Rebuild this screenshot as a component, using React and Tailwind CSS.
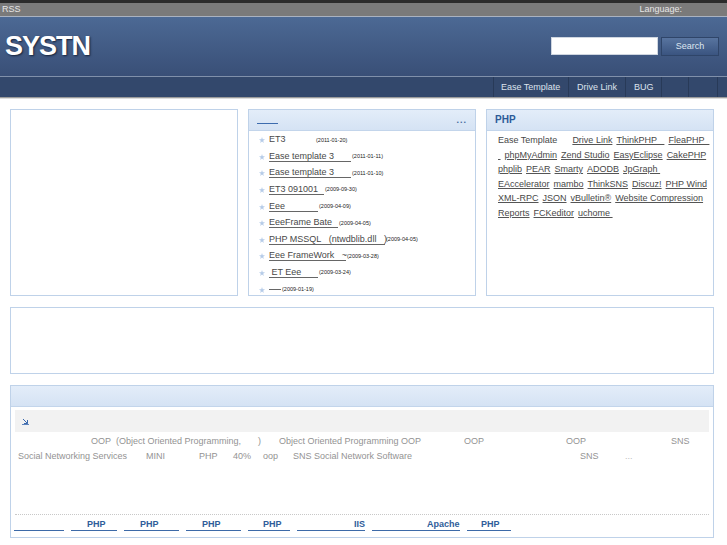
import React from "react";

const Star = () => (
  <svg width="6" height="6" viewBox="0 0 10 10" className="shrink-0">
    <polygon points="5,0 6.2,3.6 10,3.8 7,6.1 8.1,10 5,7.7 1.9,10 3,6.1 0,3.8 3.8,3.6" fill="#b5cbe8" />
  </svg>
);

const items = [
  { t: "ET3", w: "w-[46px]", u: false, d: "(2011-01-20)" },
  { t: "Ease template 3", w: "w-[82px]", u: true, d: "(2011-01-11)" },
  { t: "Ease template 3", w: "w-[82px]", u: true, d: "(2011-01-10)" },
  { t: "ET3 091001", w: "w-[55px]", u: true, d: "(2009-09-30)" },
  { t: "Eee", w: "w-[49px]", u: true, d: "(2009-04-09)" },
  { t: "EeeFrame Bate", w: "w-[69px]", u: true, d: "(2009-04-05)" },
  { t: "PHP MSSQL\u00a0\u00a0\u00a0(ntwdblib.dll\u00a0\u00a0\u00a0)", w: "w-[116px]", u: true, d: "(2009-04-05)" },
  { t: "Eee FrameWork\u00a0\u00a0\u00a0~", w: "w-[77px]", u: true, d: "(2009-03-28)" },
  { t: "\u00a0ET Eee", w: "w-[49px]", u: true, d: "(2009-03-24)" },
  { t: "", w: "w-[12px]", u: true, d: "(2009-01-19)" },
];

const L = ({ children, className = "" }) => (
  <span className={"underline underline-offset-[1px] decoration-[#555] whitespace-pre " + className}>{children}</span>
);

const line1 = [
  { t: "", w: "w-[73px]" },
  { t: "OOP", w: "w-[25px]" },
  { t: "(Object Oriented Programming,", w: "w-[142px]" },
  { t: ")", w: "w-[21px]" },
  { t: "Object Oriented Programming OOP", w: "w-[185px]" },
  { t: "OOP", w: "w-[102px]" },
  { t: "OOP", w: "w-[105px]" },
  { t: "SNS", w: "w-[30px]" },
];

const line2 = [
  { t: "Social Networking Services", w: "w-[128px]" },
  { t: "MINI", w: "w-[53px]" },
  { t: "PHP", w: "w-[34px]" },
  { t: "40%", w: "w-[30px]" },
  { t: "oop", w: "w-[30px]" },
  { t: "SNS Social Network Software", w: "w-[287px]" },
  { t: "SNS", w: "w-[45px]" },
];

const bottomLinks = [
  { t: "", c: "w-[50px] pl-[0px]" },
  { t: "PHP", c: "w-[46px] pl-[16px]" },
  { t: "PHP", c: "w-[55px] pl-[16px]" },
  { t: "PHP", c: "w-[55px] pl-[16px]" },
  { t: "PHP", c: "w-[42px] pl-[15px]" },
  { t: "IIS", c: "w-[68px] pl-[57px]" },
  { t: "Apache", c: "w-[88px] pl-[55px]" },
  { t: "PHP", c: "w-[44px] pl-[14px]" },
];

export default function App() {
  return (
    <div className="w-[727px] h-[545px] overflow-hidden bg-white text-[9px] leading-none font-['Liberation_Sans',Arial,sans-serif]">
      {/* top strip */}
      <div className="h-[3px] bg-[#2b2b2b]" />
      <div className="h-[13px] bg-[#7a7a7a] flex items-center justify-between pl-[2px] pr-[45px] text-[#e6e6e6]">
        <span>RSS</span>
        <span>Language:</span>
      </div>
      <div className="h-[1px] bg-[#a9b2c0]" />
      {/* header */}
      <div className="h-[59px] bg-linear-to-b from-[#4c6994] to-[#394f77] flex items-center justify-between pl-[5px] pr-[8px]">
        <div className="text-[27px] font-bold tracking-[-1px] text-white leading-none [text-shadow:1px_1px_2px_#15223a]">
          SYSTN
        </div>
        <div className="flex items-center gap-[3px] mt-[-1px]">
          <div className="w-[107px] h-[18px] bg-white border border-[#cfd6e0]" />
          <div className="w-[58px] h-[19px] flex items-center justify-center bg-linear-to-b from-[#58749f] to-[#3a5480] border border-[#2f4569] text-[#dfe6f0]">
            Search
          </div>
        </div>
      </div>
      <div className="h-[1px] bg-[#8090aa]" />
      {/* nav */}
      <div className="h-[20px] bg-[#33486c] flex justify-end pr-[9px] text-[#dde3ec]">
        <div className="w-[75px] border-l border-[#283a58] flex items-center pl-[7px]">Ease Template</div>
        <div className="w-[57px] border-l border-[#283a58] flex items-center pl-[8px]">Drive Link</div>
        <div className="w-[36px] border-l border-[#283a58] flex items-center pl-[8px]">BUG</div>
        <div className="w-[27px] border-l border-[#283a58]" />
        <div className="w-[30px] border-l border-r border-[#283a58]" />
      </div>
      <div className="h-[1px] bg-[#9c9c9c]" />
      <div className="h-[1px] bg-[#dcdcdc]" />

      {/* main */}
      <div className="pt-[10px] pl-[10px] w-[714px]">
        <div className="flex gap-[10px] h-[187px]">
          <div className="w-[228px] border border-[#bfd2e9]" />

          <div className="w-[228px] border border-[#bfd2e9] flex flex-col overflow-hidden">
            <div className="h-[21px] shrink-0 bg-linear-to-b from-[#e3edf9] to-[#d5e3f4] border-b border-[#c3d5eb] flex items-center justify-between pl-[8px] pr-[8px]">
              <span className="inline-block w-[21px] h-[8px] border-b border-[#3d6cae]" />
              <span className="text-[#45689c] font-bold tracking-[1px]">...</span>
            </div>
            <ul className="pt-[1px] text-[#484848]">
              {items.map((it, i) => (
                <li key={i} className="h-[16.6px] flex items-center pl-[10px]">
                  <Star />
                  <span
                    className={
                      "ml-[4px] inline-block leading-[9px] whitespace-pre " +
                      it.w +
                      (it.u ? " border-b border-[#666]" : " border-b border-transparent")
                    }
                  >
                    {it.t}
                  </span>
                  <span className="ml-[1px] text-[5.5px] text-[#222] whitespace-nowrap">{it.d}</span>
                </li>
              ))}
            </ul>
          </div>

          <div className="w-[228px] border border-[#bfd2e9] flex flex-col">
            <div className="h-[21px] shrink-0 bg-linear-to-b from-[#e3edf9] to-[#d5e3f4] border-b border-[#c3d5eb] flex items-center pl-[8px]">
              <span className="text-[10px] font-bold text-[#2c5a98]">PHP</span>
            </div>
            <div className="pt-[2px] pl-[11px] text-[#484848] leading-[14.6px]">
              <div className="flex gap-[4px] whitespace-nowrap">
                <span>Ease Template</span>
                <L className="ml-[11px]">Drive Link</L>
                <L>{"ThinkPHP\u00a0\u00a0\u00a0"}</L>
                <L>{"FleaPHP\u00a0\u00a0"}</L>
              </div>
              <div className="flex gap-[4px] whitespace-nowrap">
                <L>{"\u00a0"}</L>
                <L>phpMyAdmin</L>
                <L>Zend Studio</L>
                <L>EasyEclipse</L>
                <L>CakePHP</L>
              </div>
              <div className="flex gap-[4px] whitespace-nowrap">
                <L>phplib</L>
                <L>PEAR</L>
                <L>Smarty</L>
                <L>ADODB</L>
                <L>{"JpGraph\u00a0"}</L>
              </div>
              <div className="flex gap-[4px] whitespace-nowrap">
                <L>EAccelerator</L>
                <L>mambo</L>
                <L>ThinkSNS</L>
                <L>Discuz!</L>
                <L>PHP Wind</L>
              </div>
              <div className="flex gap-[4px] whitespace-nowrap">
                <L>XML-RPC</L>
                <L>JSON</L>
                <L>vBulletin®</L>
                <L>Website Compression</L>
              </div>
              <div className="flex gap-[4px] whitespace-nowrap">
                <L>Reports</L>
                <L>FCKeditor</L>
                <L>{"uchome\u00a0"}</L>
              </div>
            </div>
          </div>
        </div>

        <div className="mt-[11px] h-[67px] border border-[#bfd2e9]" />

        <div className="mt-[11px] h-[153px] border border-[#bfd2e9] flex flex-col">
          <div className="h-[21px] shrink-0 bg-linear-to-b from-[#e3edf9] to-[#d5e3f4] border-b border-[#c3d5eb]" />
          <div className="mx-[4px] mt-[3px] h-[22px] bg-[#f2f2f2] flex items-center pl-[7px]">
            <svg width="7" height="7" viewBox="0 0 7 7">
              <path d="M1 1 L5.5 5.5 M5.5 2 L5.5 5.5 L2 5.5" stroke="#3a68ad" strokeWidth="1" fill="none" />
              <path d="M0 6.5 H7" stroke="#3a68ad" strokeWidth="0.8" />
            </svg>
          </div>
          <div className="mt-[2px] pl-[7px] text-[#939393] leading-[15px]">
            <div className="flex whitespace-nowrap">
              {line1.map((s, i) => (
                <span key={i} className={"shrink-0 " + s.w}>{s.t}</span>
              ))}
            </div>
            <div className="flex whitespace-nowrap">
              {line2.map((s, i) => (
                <span key={i} className={"shrink-0 " + s.w}>{s.t}</span>
              ))}
              <span className="text-[#bbbbbb]">...</span>
            </div>
          </div>
          <div className="mx-[4px] mt-[50px] border-t border-dotted border-[#c8c8c8]" />
          <div className="mt-[4px] ml-[3px] flex gap-[7px]">
            {bottomLinks.map((b, i) => (
              <span
                key={i}
                className={"inline-block h-[12px] leading-[11px] border-b border-[#3d6aa8] text-[#2f5d9a] font-bold whitespace-nowrap " + b.c}
              >
                {b.t}
              </span>
            ))}
          </div>
        </div>
      </div>
    </div>
  );
}
